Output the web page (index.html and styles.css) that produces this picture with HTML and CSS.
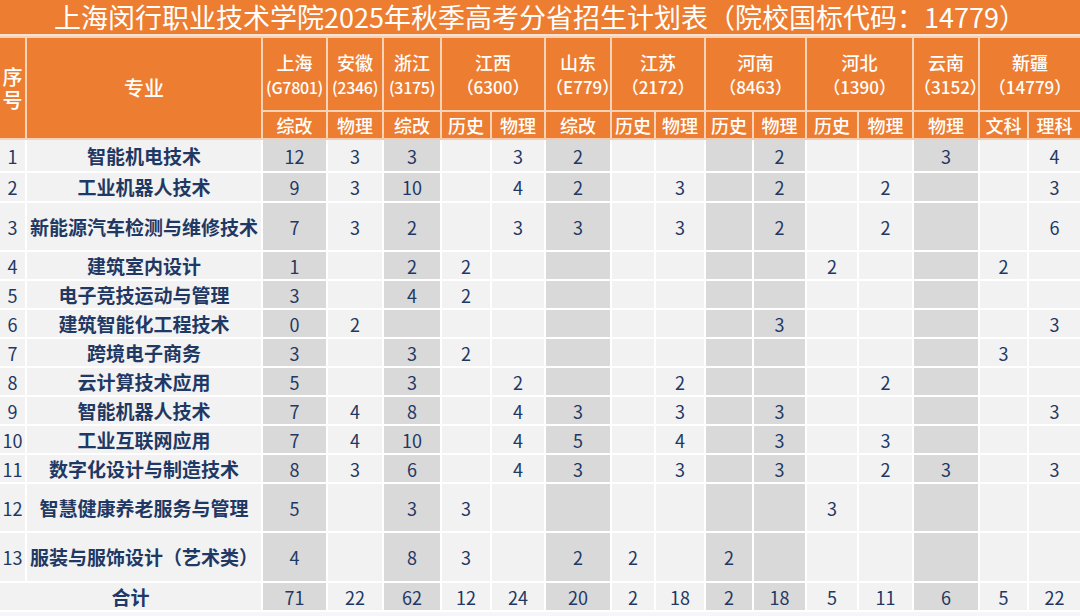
FILE: index.html
```html
<!DOCTYPE html>
<html lang="zh-CN">
<head>
<meta charset="utf-8">
<title>上海闵行职业技术学院2025年秋季高考分省招生计划表</title>
<link rel="stylesheet" href="styles.css">
</head>
<body>
<div class="title"><span class="title-text">上海闵行职业技术学院2025年秋季高考分省招生计划表（院校国标代码：14779）</span></div>
<table class="plan">
  <colgroup>
    <col class="c-no"><col class="c-major">
    <col class="c-sh s"><col class="c-ah"><col class="c-zj s">
    <col class="c-jx1"><col class="c-jx2">
    <col class="c-sd s">
    <col class="c-js1"><col class="c-js2">
    <col class="c-hn1 s"><col class="c-hn2 s">
    <col class="c-hb1"><col class="c-hb2">
    <col class="c-yn s">
    <col class="c-xj1"><col class="c-xj2">
  </colgroup>
  <thead>
    <tr class="h1">
      <th rowspan="2" class="no-head">序号</th>
      <th rowspan="2" class="major-head">专业</th>
      <th>上海<br><span class="code tight">(G7801)</span></th>
      <th>安徽<br><span class="code tight">(2346)</span></th>
      <th>浙江<br><span class="code tight">(3175)</span></th>
      <th colspan="2">江西<br><span class="code">（6300）</span></th>
      <th>山东<br><span class="code">（E779）</span></th>
      <th colspan="2">江苏<br><span class="code">（2172）</span></th>
      <th colspan="2">河南<br><span class="code">（8463）</span></th>
      <th colspan="2">河北<br><span class="code">（1390）</span></th>
      <th>云南<br><span class="code">（3152）</span></th>
      <th colspan="2">新疆<br><span class="code">（14779）</span></th>
    </tr>
    <tr class="h2">
      <th>综改</th><th>物理</th><th>综改</th>
      <th>历史</th><th>物理</th>
      <th>综改</th>
      <th>历史</th><th>物理</th>
      <th>历史</th><th>物理</th>
      <th>历史</th><th>物理</th>
      <th>物理</th>
      <th>文科</th><th>理科</th>
    </tr>
  </thead>
  <tbody>
    <tr class="r-first"><td>1</td><td class="major">智能机电技术</td><td>12</td><td>3</td><td>3</td><td></td><td>3</td><td>2</td><td></td><td></td><td></td><td>2</td><td></td><td></td><td>3</td><td></td><td>4</td></tr>
    <tr class="r-second"><td>2</td><td class="major">工业机器人技术</td><td>9</td><td>3</td><td>10</td><td></td><td>4</td><td>2</td><td></td><td>3</td><td></td><td>2</td><td></td><td>2</td><td></td><td></td><td>3</td></tr>
    <tr class="r-tall"><td>3</td><td class="major">新能源汽车检测与维修技术</td><td>7</td><td>3</td><td>2</td><td></td><td>3</td><td>3</td><td></td><td>3</td><td></td><td>2</td><td></td><td>2</td><td></td><td></td><td>6</td></tr>
    <tr class="r-std"><td>4</td><td class="major">建筑室内设计</td><td>1</td><td></td><td>2</td><td>2</td><td></td><td></td><td></td><td></td><td></td><td></td><td>2</td><td></td><td></td><td>2</td><td></td></tr>
    <tr class="r-std"><td>5</td><td class="major">电子竞技运动与管理</td><td>3</td><td></td><td>4</td><td>2</td><td></td><td></td><td></td><td></td><td></td><td></td><td></td><td></td><td></td><td></td><td></td></tr>
    <tr class="r-std"><td>6</td><td class="major">建筑智能化工程技术</td><td>0</td><td>2</td><td></td><td></td><td></td><td></td><td></td><td></td><td></td><td>3</td><td></td><td></td><td></td><td></td><td>3</td></tr>
    <tr class="r-std"><td>7</td><td class="major">跨境电子商务</td><td>3</td><td></td><td>3</td><td>2</td><td></td><td></td><td></td><td></td><td></td><td></td><td></td><td></td><td></td><td>3</td><td></td></tr>
    <tr class="r-std"><td>8</td><td class="major">云计算技术应用</td><td>5</td><td></td><td>3</td><td></td><td>2</td><td></td><td></td><td>2</td><td></td><td></td><td></td><td>2</td><td></td><td></td><td></td></tr>
    <tr class="r-std"><td>9</td><td class="major">智能机器人技术</td><td>7</td><td>4</td><td>8</td><td></td><td>4</td><td>3</td><td></td><td>3</td><td></td><td>3</td><td></td><td></td><td></td><td></td><td>3</td></tr>
    <tr class="r-std"><td>10</td><td class="major">工业互联网应用</td><td>7</td><td>4</td><td>10</td><td></td><td>4</td><td>5</td><td></td><td>4</td><td></td><td>3</td><td></td><td>3</td><td></td><td></td><td></td></tr>
    <tr class="r-std"><td>11</td><td class="major">数字化设计与制造技术</td><td>8</td><td>3</td><td>6</td><td></td><td>4</td><td>3</td><td></td><td>3</td><td></td><td>3</td><td></td><td>2</td><td>3</td><td></td><td>3</td></tr>
    <tr class="r-tall"><td>12</td><td class="major">智慧健康养老服务与管理</td><td>5</td><td></td><td>3</td><td>3</td><td></td><td></td><td></td><td></td><td></td><td></td><td>3</td><td></td><td></td><td></td><td></td></tr>
    <tr class="r-tall r-last"><td>13</td><td class="major">服装与服饰设计（艺术类）</td><td>4</td><td></td><td>8</td><td>3</td><td></td><td>2</td><td>2</td><td></td><td>2</td><td></td><td></td><td></td><td></td><td></td><td></td></tr>
    <tr class="r-total"><td colspan="2" class="major">合计</td><td>71</td><td>22</td><td>62</td><td>12</td><td>24</td><td>20</td><td>2</td><td>18</td><td>2</td><td>18</td><td>5</td><td>11</td><td>6</td><td>5</td><td>22</td></tr>
  </tbody>
</table>
</body>
</html>
```
FILE: styles.css
```css
html, body {
  margin: 0;
  padding: 0;
}
body {
  width: 1080px;
  height: 616px;
  overflow: hidden;
  background: #f4f6fa;
  font-family: "Noto Sans CJK SC", "Noto Sans", sans-serif;
}
.title {
  height: 34px;
  display: flex;
  align-items: center;
  justify-content: center;
  background: #ed7d31;
  color: #ffffff;
  border-bottom: 2px solid #fbe1cf;
}
.title-text {
  font-size: 27px;
  line-height: 30px;
  white-space: nowrap;
}
.plan {
  width: 1080px;
  table-layout: fixed;
  border-collapse: collapse;
  background: #f2f2f2;
}
.c-no { width: 26px; }
.c-major { width: 236px; }
.c-sh { width: 65px; }
.c-ah { width: 56px; }
.c-zj { width: 58px; }
.c-jx1 { width: 50px; }
.c-jx2 { width: 54px; }
.c-sd { width: 66px; }
.c-js1 { width: 44px; }
.c-js2 { width: 50px; }
.c-hn1 { width: 48px; }
.c-hn2 { width: 53px; }
.c-hb1 { width: 52px; }
.c-hb2 { width: 55px; }
.c-yn { width: 66px; }
.c-xj1 { width: 49px; }
.c-xj2 { width: 52px; }
col.s { background: #d9d9d9; }

.plan th {
  background: #ed7d31;
  color: #ffffff;
  font-weight: 500;
  font-size: 18px;
  line-height: 24px;
  text-align: center;
  padding: 0;
  white-space: nowrap;
  overflow: visible;
  border: 2px solid #f9d3b8;
}
.plan .code {
  font-size: 17px;
}
.plan .code.tight {
  font-size: 16px;
  letter-spacing: -0.3px;
}
.plan tr.h1 th { height: 72px; }
.plan tr.h2 th { height: 26px; }
.plan th.no-head {
  white-space: normal;
  font-size: 20px;
  line-height: 23px;
  border-left: 0;
}
.plan th.major-head { font-size: 20px; }
.plan thead tr.h2 th { border-bottom: 2px solid #f8cbad; }

.plan td {
  padding: 0;
  border: 2px solid #ffffff;
  color: #1f3864;
  font-size: 18px;
  text-align: center;
  white-space: nowrap;
  line-height: 22px;
}
.plan td:first-child { border-left: 0; }
.plan td:last-child, .plan th:last-child { border-right: 0; }
.plan td.major {
  font-weight: 700;
  font-size: 19px;
}
.plan tr.r-first td { height: 31px; }
.plan tr.r-second td { height: 28px; }
.plan tr.r-std td { height: 27px; }
.plan tr.r-tall td { height: 47px; }
.plan tr.r-last td { height: 48px; }
.plan tr.r-total td { height: 27px; }
```
